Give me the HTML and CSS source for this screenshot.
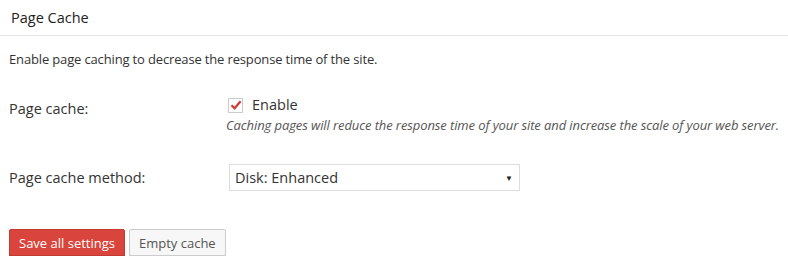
FILE: index.html
```html
<!DOCTYPE html>
<html lang="en">
<head>
    <meta charset="UTF-8">
    <title>Page Cache</title>
    <link rel="stylesheet" href="styles.css">
</head>
<body>
    <div class="box">
        <h3 class="box-title">Page Cache</h3>
        <div class="box-body">
            <p class="intro">Enable page caching to decrease the response time of the site.</p>
            <div class="row">
                <div class="row-label">Page cache:</div>
                <div class="row-field">
                    <label class="check">
                        <span class="checkbox">
                            <svg width="12" height="10" viewBox="0 0 12 10"><path d="M1.5 5.2 L4.6 8.3 L10.6 1.3" fill="none" stroke="#d0383a" stroke-width="2.2"/></svg>
                        </span>
                        Enable
                    </label>
                    <div class="note">Caching pages will reduce the response time of your site and increase the scale of your web server.</div>
                </div>
            </div>
            <div class="row row-method">
                <div class="row-label">Page cache method:</div>
                <div class="row-field">
                    <div class="select">
                        <span>Disk: Enhanced</span>
                        <span class="arrow">&#9660;</span>
                    </div>
                </div>
            </div>
            <div class="actions">
                <button class="btn btn-primary">Save all settings</button>
                <button class="btn">Empty cache</button>
            </div>
        </div>
    </div>
</body>
</html>
```

FILE: styles.css
```css
body {
    margin: 0;
    background-color: #ffffff;
    color: #333333;
    font-family: "Open Sans", sans-serif;
    font-size: 13px;
}
.box-title {
    margin: 0;
    padding: 8px 11px 0;
    height: 27px;
    font-size: 14.5px;
    font-weight: normal;
    color: #222222;
    border-bottom: 1px solid #e5e5e5;
    line-height: 19px;
}
.box-body {
    padding: 0 9px;
}
.intro {
    margin: 13px 0 0;
    line-height: 20px;
    letter-spacing: -0.15px;
}
.row {
    display: flex;
    margin-top: 26px;
}
.row-label {
    width: 220px;
    font-size: 14.5px;
    line-height: 20px;
    padding-top: 4px;
}
.check {
    display: flex;
    align-items: center;
    gap: 9px;
    padding-left: 2px;
    font-size: 14.5px;
    line-height: 20px;
    color: #333333;
}
.checkbox {
    display: flex;
    align-items: center;
    justify-content: center;
    width: 13px;
    height: 13px;
    border: 1px solid #cccccc;
    background: #ffffff;
}
.note {
    font-style: italic;
    color: #555555;
    line-height: 20px;
    white-space: nowrap;
    letter-spacing: -0.1px;
}
.row-method {
    margin-top: 29px;
    align-items: center;
}
.row-method .row-label {
    padding-top: 0;
}
.select {
    display: flex;
    justify-content: space-between;
    align-items: center;
    width: 291px;
    height: 27px;
    padding: 0 6px 0 5px;
    border: 1px solid #dddddd;
    font-size: 14.5px;
    color: #333333;
    box-sizing: border-box;
}
.arrow {
    font-size: 8px;
    color: #222222;
}
.actions {
    display: flex;
    gap: 4px;
    margin-top: 38px;
}
.btn {
    font-family: "Open Sans", sans-serif;
    font-size: 13px;
    height: 27px;
    padding: 0 9px;
    border: 1px solid #cccccc;
    border-radius: 2px;
    background: #f7f7f7;
    color: #555555;
    box-shadow: 0 1px 0 #cccccc;
}
.btn-primary {
    background: #d9453c;
    border-color: #c23a30;
    color: #ffffff;
    box-shadow: 0 1px 0 #b3342c;
}
```
